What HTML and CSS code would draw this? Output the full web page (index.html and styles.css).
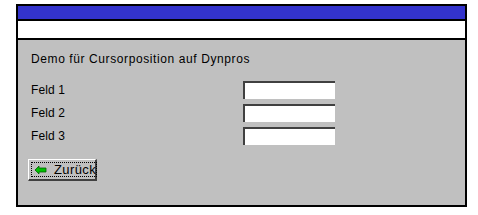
FILE: index.html
```html
<!DOCTYPE html>
<html lang="de">
<head>
    <meta charset="UTF-8">
    <title>Demo Cursorposition</title>
    <link rel="stylesheet" href="styles.css">
</head>
<body>
<div class="window">
    <div class="title-bar"></div>
    <div class="menu-bar"></div>

    <!-- Dynpro -->
    <div class="dynpro">
        <div class="heading">Demo für Cursorposition auf Dynpros</div>
        <div class="fields">
            <label class="row"><span class="label">Feld 1</span><input class="field" type="text"></label>
            <label class="row"><span class="label">Feld 2</span><input class="field" type="text"></label>
            <label class="row"><span class="label">Feld 3</span><input class="field" type="text"></label>
        </div>
        <button class="button" type="button">
            <span class="focus">
                <svg class="arrow" width="12" height="8" viewBox="0 0 12 8">
                    <path d="M0 4 L4 0 L4 2 L11 2 L11 6 L4 6 L4 8 Z" fill="#00c000" stroke="#006000" stroke-width="0.8"/>
                </svg>
                <span class="caption">Zurück</span>
            </span>
        </button>
    </div>
</div>
</body>
</html>
```

FILE: styles.css
```css
* {
    box-sizing: border-box;
    margin: 0;
    padding: 0;
}

body {
    background-color: #fff;
    font-family: 'Liberation Sans', Arial, sans-serif;
    font-size: 12px;
    color: #000;
}

.window {
    margin: 4px 11px 0 16px;
    width: 451px;
    height: 203px;
    border: 2px solid #000;
    display: flex;
    flex-direction: column;
}

.title-bar {
    height: 15px;
    background-color: #3333cc;
    border-bottom: 2px solid #000;
}

.menu-bar {
    height: 19px;
    background-color: #fff;
    border-bottom: 2px solid #000;
}

.dynpro {
    flex: 1;
    background-color: #c0c0c0;
    padding: 12px 0 0 12px;
}

.heading {
    height: 20px;
    line-height: 14px;
    padding-left: 1px;
    letter-spacing: 0.6px;
}

.fields {
    display: flex;
    flex-direction: column;
    gap: 5px;
    margin-top: 9px;
}

.row {
    display: flex;
    align-items: center;
    height: 18px;
}

.label {
    width: 213px;
    padding-left: 1px;
    letter-spacing: 0.1px;
}

.field {
    width: 92px;
    height: 18px;
    background-color: #fff;
    border-style: solid;
    border-width: 2px 0 0 2px;
    border-color: #404040;
    outline: none;
}

.button {
    margin: 14px 0 0 -2px;
    width: 69px;
    height: 22px;
    background-color: #c0c0c0;
    border-style: solid;
    border-width: 1px 2px 2px 1px;
    border-color: #fff #404040 #404040 #fff;
    padding: 2px;
    font: inherit;
    display: flex;
}

.focus {
    flex: 1;
    display: flex;
    align-items: center;
    border: 1px dotted #000;
    padding-left: 3px;
    gap: 7px;
}

.caption {
    font-size: 13px;
    letter-spacing: 0.4px;
}
```
